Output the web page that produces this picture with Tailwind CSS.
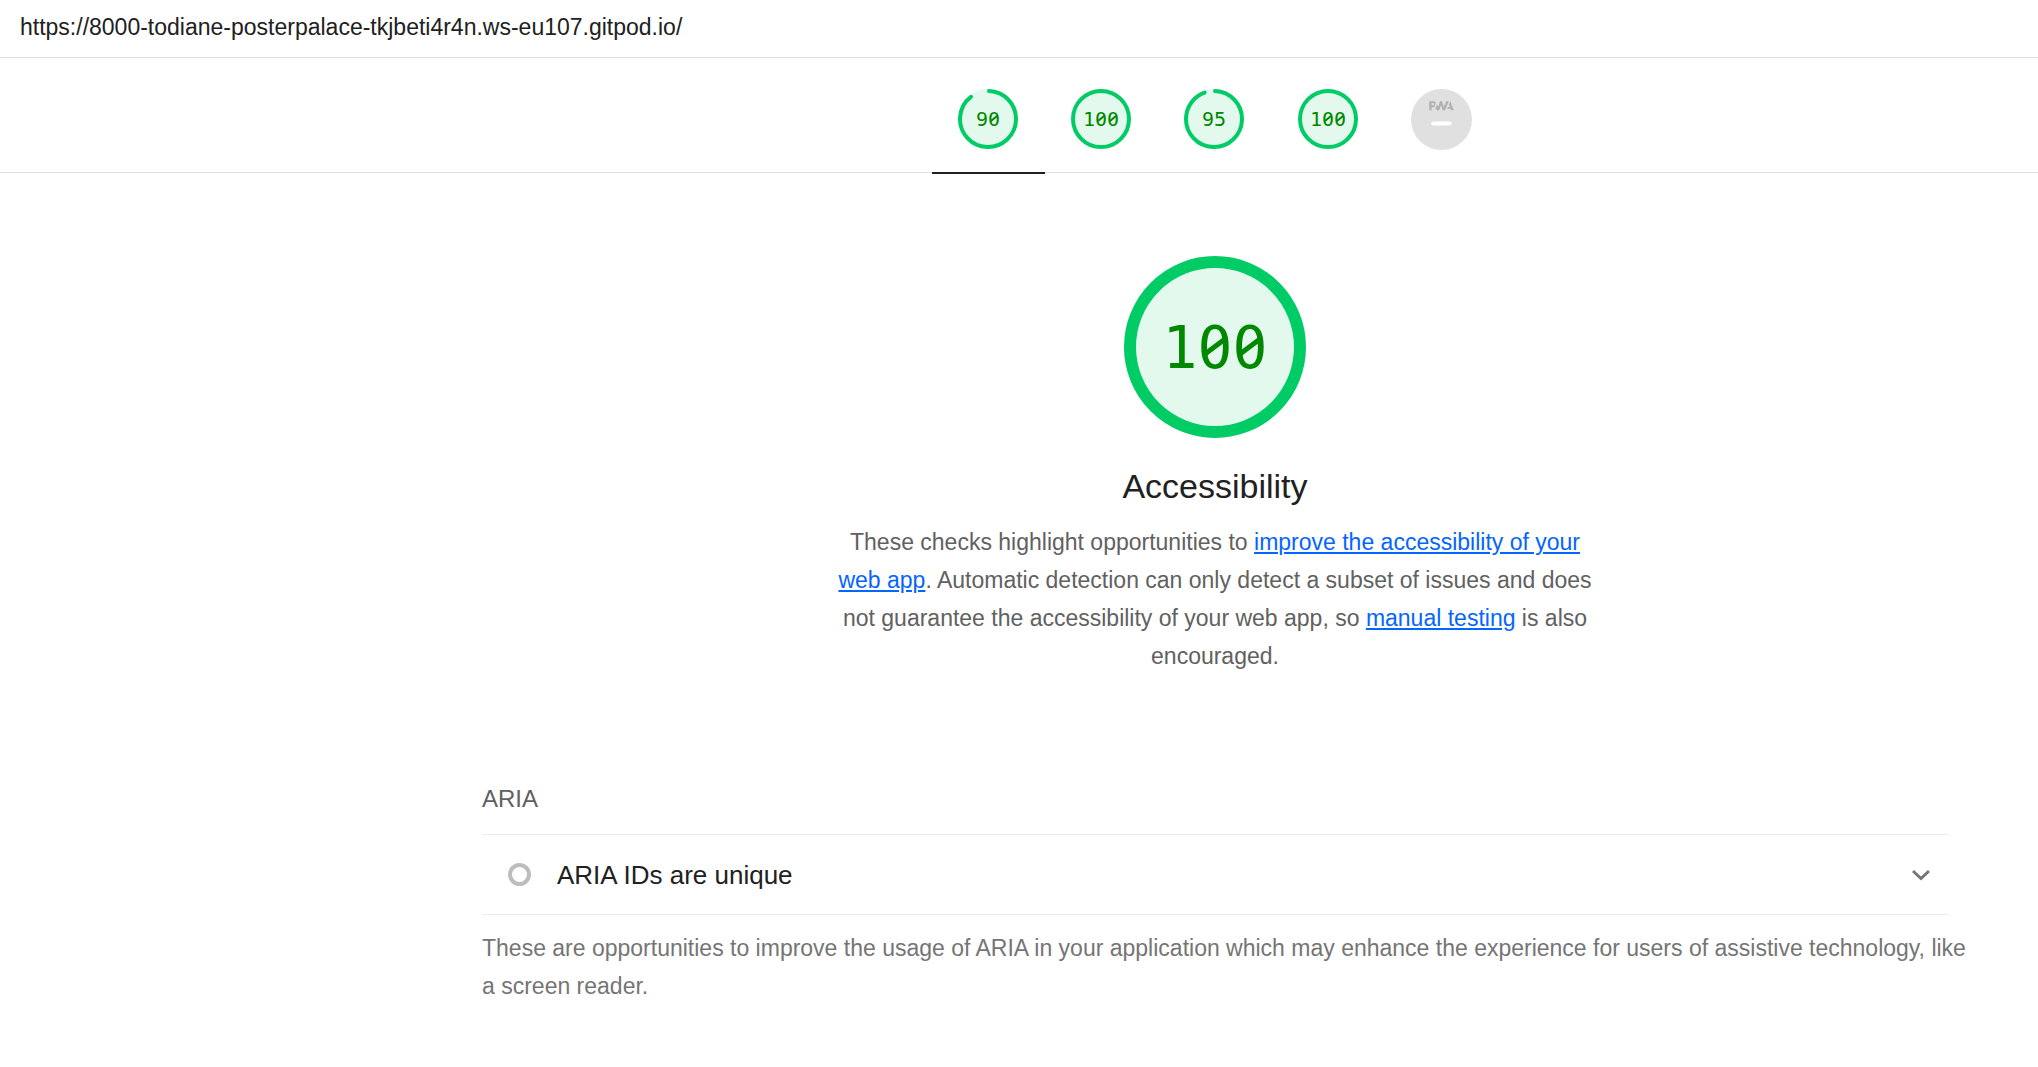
<!DOCTYPE html>
<html lang="en">
<head>
<meta charset="utf-8">
<title>Lighthouse Report</title>
<script src="https://cdn.jsdelivr.net/npm/@tailwindcss/browser@4"></script>
</head>
<body class="bg-white font-['Liberation_Sans',Arial,sans-serif] text-[#212121]">
<header class="flex h-[58px] items-center border-b border-[#e0e0e0] px-5 pb-1">
  <a href="#" class="text-[23px] leading-8">https://8000-todiane-posterpalace-tkjbeti4r4n.ws-eu107.gitpod.io/</a>
</header>
<nav class="flex h-[115px] justify-center border-b border-[#e0e0e0] pl-[392px]">
  <div class="grid h-[116px] w-[566px] grid-cols-5 font-['DejaVu_Sans_Mono',monospace] text-xl text-[#008800]">
    <a href="#" class="flex justify-center border-b-2 border-[#212121] pt-[31px]">
      <svg class="size-[61px]" viewBox="0 0 61 61"><circle cx="30" cy="30" r="30" fill="#e4f9ee"/><circle cx="30" cy="30" r="28" fill="none" stroke="#00cc66" stroke-width="4" stroke-linecap="round" pathLength="100" stroke-dasharray="89 100" transform="rotate(-88 30 30)"/><text x="30" y="37" text-anchor="middle" fill="currentColor">90</text><circle cx="36" cy="30" r="2" fill="#e4f9ee"/><path d="M33 32l6-5" stroke="currentColor" stroke-width="2"/></svg>
    </a>
    <a href="#" class="flex justify-center pt-[31px]">
      <svg class="size-[61px]" viewBox="0 0 61 61"><circle cx="30" cy="30" r="28" fill="#e4f9ee" stroke="#00cc66" stroke-width="4"/><text x="30" y="37" text-anchor="middle" fill="currentColor">100</text><path d="M28 30h4M40 30h4" stroke="#e4f9ee" stroke-width="4"/><path d="M27 32l6-5M39 32l6-5" stroke="currentColor" stroke-width="2"/></svg>
    </a>
    <a href="#" class="flex justify-center pt-[31px]">
      <svg class="size-[61px]" viewBox="0 0 61 61"><circle cx="30" cy="30" r="30" fill="#e4f9ee"/><circle cx="30" cy="30" r="28" fill="none" stroke="#00cc66" stroke-width="4" stroke-linecap="round" pathLength="100" stroke-dasharray="94 100" transform="rotate(-88 30 30)"/><text x="30" y="37" text-anchor="middle" fill="currentColor">95</text></svg>
    </a>
    <a href="#" class="flex justify-center pt-[31px]">
      <svg class="size-[61px]" viewBox="0 0 61 61"><circle cx="30" cy="30" r="28" fill="#e4f9ee" stroke="#00cc66" stroke-width="4"/><text x="30" y="37" text-anchor="middle" fill="currentColor">100</text><path d="M28 30h4M40 30h4" stroke="#e4f9ee" stroke-width="4"/><path d="M27 32l6-5M39 32l6-5" stroke="currentColor" stroke-width="2"/></svg>
    </a>
    <a href="#" aria-label="PWA" class="flex justify-center pt-[31px]">
      <svg class="size-[61px]" viewBox="0 0 60 60"><circle cx="30" cy="30" r="30" fill="#e0e0e0"/><g fill="#b0b0b0"><path d="M35.660 19.390l.7-1.750h2L37.400 15 38.600 12l3.400 9h-2.510l-.580-1.610z"/><path d="M33.520 21l3.650-9h-2.420l-2.500 5.820L30.500 12h-1.860l-1.900 5.820-1.350-2.650-1.210 3.720L25.400 21h2.380l1.720-5.200 1.640 5.200z"/><path fill-rule="evenodd" d="M20.300 17.910h1.480c.45 0 .85-.05 1.200-.15l.39-1.180 1.070-3.300a2.640 2.640 0 0 0-.28-.37c-.55-.6-1.360-.91-2.420-.91H18v9h2.300v-3.090zm1.960-3.840c.22.22.33.5.33.87 0 .36-.1.65-.29.87-.2.23-.59.35-1.150.35h-.86v-2.410h.87c.52 0 .89.1 1.100.32z"/></g><path d="M22 34h16" stroke="#fff" stroke-width="4" stroke-linecap="round"/></svg>
    </a>
  </div>
</nav>
<main class="pr-[90px] pl-[482px]">
  <section class="mx-auto flex max-w-[760px] flex-col items-center pt-[83px] text-center">
    <svg class="size-[182px]" viewBox="0 0 182 182"><circle cx="91" cy="91" r="85" fill="#e4f9ee" stroke="#00cc66" stroke-width="12"/><text x="91" y="112" text-anchor="middle" fill="#008800" class="font-['DejaVu_Sans_Mono',monospace] text-[58px]">100</text><g fill="#e4f9ee"><circle cx="91" cy="91" r="6"/><circle cx="126" cy="91" r="6"/></g><path d="M81 98l20-15M116 98l20-15" stroke="#008800" stroke-width="5"/></svg>
    <h1 class="mt-7 text-[34px] leading-10">Accessibility</h1>
    <p class="mt-[17px] text-[23px] leading-[38px] text-[#616161]">These checks highlight opportunities to <a href="#" class="text-[#0565ff] underline">improve the accessibility of your web app</a>. Automatic detection can only detect a subset of issues and does not guarantee the accessibility of your web app, so <a href="#" class="text-[#0565ff] underline">manual testing</a> is also encouraged.</p>
  </section>
  <section class="mt-[106px]">
    <h2 class="text-2xl leading-9 text-[#616161]">ARIA</h2>
    <details class="mt-[17px] border-y border-[#ebebeb]">
      <summary class="flex h-[79px] cursor-pointer list-none items-center px-[26px]">
        <span class="size-[23px] rounded-full border-4 border-[#bdbdbd]"></span>
        <span class="ml-[26px] flex-1 text-[26px] leading-9">ARIA IDs are unique</span>
        <svg class="-mr-2 h-3 w-[18px]" viewBox="0 0 18 12" fill="none" stroke="#757575" stroke-width="3"><path d="M1 2l8 7.500 8-7.500"/></svg>
      </summary>
      <p>No duplicate ARIA IDs were found.</p>
    </details>
    <p class="-mr-7 mt-[14px] text-[23px] leading-[38px] text-[#757575]">These are opportunities to improve the usage of ARIA in your application which may enhance the experience for users of assistive technology, like a screen reader.</p>
  </section>
</main>
</body>
</html>
